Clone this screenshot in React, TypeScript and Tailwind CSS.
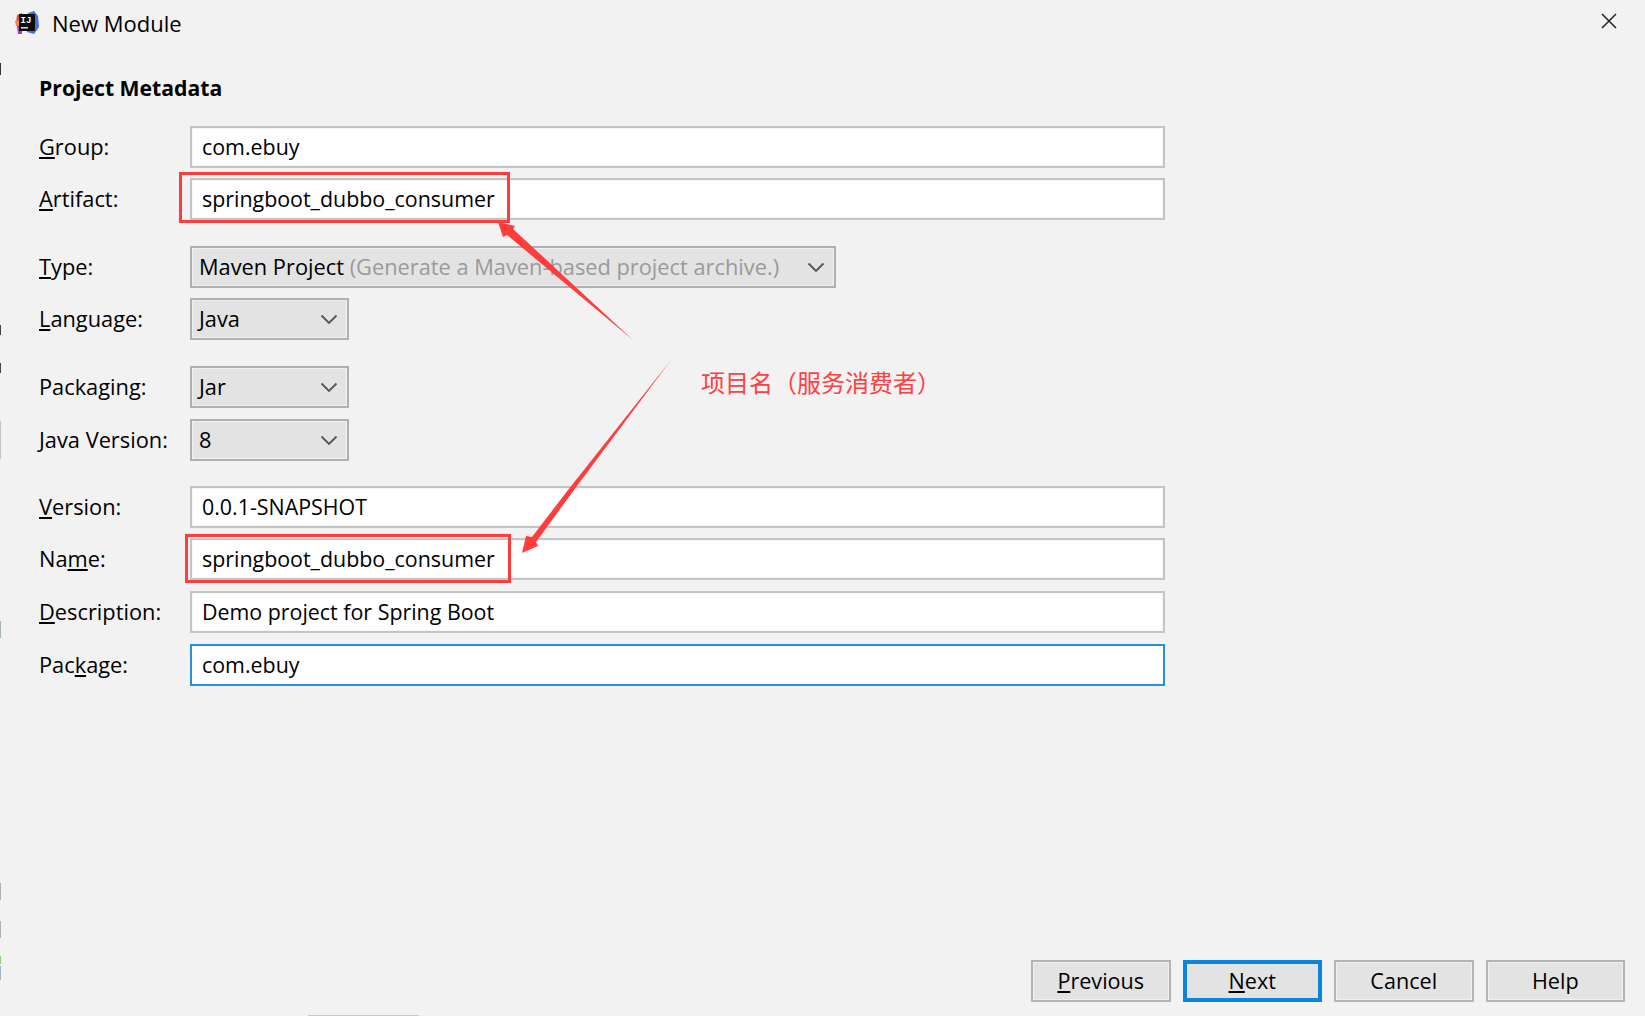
import type { ReactNode } from 'react'

const uiFont = "font-['Open_Sans','Noto_Sans',sans-serif]"

function Label({ before = '', mark, after = '' }: { before?: string; mark: string; after?: string }) {
  return (
    <label className="w-[151px] shrink-0 text-[21.8px] text-black">
      {before}
      <span className="underline underline-offset-2">{mark}</span>
      {after}
    </label>
  )
}

function TextField({ value, focused = false }: { value: string; focused?: boolean }) {
  return (
    <div
      className={`flex h-[42px] w-[975px] items-center bg-white pl-[10px] text-[21.4px] text-black border-2 ${
        focused ? 'border-[#2b8fd8]' : 'border-[#c4c4c4] shadow-[inset_0_0_0_1px_#f6f6f6]'
      }`}
    >
      {value}
    </div>
  )
}

function Chevron() {
  return (
    <svg width="18" height="11" viewBox="0 0 18 11" className="shrink-0">
      <path d="M1.5 1.5 L9 9 L16.5 1.5" fill="none" stroke="#555555" strokeWidth="1.8" />
    </svg>
  )
}

function Combo({ className, children }: { className: string; children: ReactNode }) {
  return (
    <div className={`flex h-[42px] items-center justify-between border-2 border-[#b0b0b0] bg-[#e3e3e3] pl-[7px] pr-[9px] text-[21.8px] text-black shadow-[inset_0_0_0_1px_#f0f0f0] ${className}`}>
      <span className="whitespace-nowrap">{children}</span>
      <Chevron />
    </div>
  )
}

function Row({ className = '', children }: { className?: string; children: ReactNode }) {
  return <div className={`relative flex items-center ${className}`}>{children}</div>
}

function DialogButton({ children, primary = false }: { children: ReactNode; primary?: boolean }) {
  return (
    <button
      className={`h-[42px] w-[139.5px] bg-[#e3e3e3] text-[21.6px] text-black ${
        primary ? 'border-4 border-[#0a84dc]' : 'border-2 border-[#b4b4b4] shadow-[inset_0_0_0_1px_#f0f0f0]'
      }`}
    >
      {children}
    </button>
  )
}

export default function App() {
  return (
    <div className={`relative h-[1016px] w-[1645px] overflow-hidden bg-[#f2f2f2] ${uiFont}`}>
      {/* title bar */}
      <header className="flex h-[48px] items-center pb-[2px] pl-[14px] pr-[28px]">
        <svg width="26" height="26" viewBox="0 0 26 26" className="shrink-0">
          <polygon points="14,3 20,1 24,6 25,17 20,24 13,22" fill="#4a6ee0" />
          <polygon points="3,5 8,3 8,14 2,13" fill="#f2453d" />
          <polygon points="1,11 5,10 5,16 2,16" fill="#f58a2c" />
          <polygon points="3,16 8,16 8,24 4,24" fill="#b03ac8" />
          <rect x="5" y="4" width="16" height="17" fill="#0d0d0d" />
          <rect x="7" y="17" width="7" height="1.5" fill="#dddddd" />
          <text x="6.5" y="13" fontSize="9" fontWeight="700" fill="#ffffff" fontFamily="Liberation Mono, monospace">IJ</text>
        </svg>
        <span className="ml-[12px] text-[22px] text-black">New Module</span>
        <svg width="16" height="16" viewBox="0 0 16 16" className="mt-[-4px] ml-auto">
          <path d="M1 1 L15 15 M15 1 L1 15" stroke="#222222" strokeWidth="1.5" />
        </svg>
      </header>

      {/* form */}
      <main className="pl-[39px]">
        <h2 className="mt-[24px] text-[21.2px] leading-[32px] font-bold text-black">Project Metadata</h2>

        <Row className="mt-[22px]">
          <Label mark="G" after="roup:" />
          <TextField value="com.ebuy" />
        </Row>
        <Row className="mt-[10px]">
          <Label mark="A" after="rtifact:" />
          <TextField value="springboot_dubbo_consumer" />
          <div className="absolute left-[140px] top-[-6px] h-[51px] w-[331px] border-[3px] border-[#ff3d3d]" />
        </Row>

        <Row className="mt-[26px]">
          <Label mark="T" after="ype:" />
          <Combo className="w-[646px]">
            Maven Project <span className="text-[#9a9a9a]">(Generate a Maven-based project archive.)</span>
          </Combo>
        </Row>
        <Row className="mt-[10px]">
          <Label mark="L" after="anguage:" />
          <Combo className="w-[159px]">Java</Combo>
        </Row>

        <Row className="mt-[26px]">
          <Label before="Packa" mark="g" after="ing:" />
          <Combo className="w-[159px]">Jar</Combo>
        </Row>
        <Row className="mt-[11px]">
          <Label mark="J" after="ava Version:" />
          <Combo className="w-[159px]">8</Combo>
        </Row>

        <Row className="mt-[25px]">
          <Label mark="V" after="ersion:" />
          <TextField value="0.0.1-SNAPSHOT" />
        </Row>
        <Row className="mt-[10px]">
          <Label before="Na" mark="m" after="e:" />
          <TextField value="springboot_dubbo_consumer" />
          <div className="absolute left-[146px] top-[-4px] h-[49px] w-[326px] border-[3px] border-[#ff3d3d]" />
        </Row>
        <Row className="mt-[11px]">
          <Label mark="D" after="escription:" />
          <TextField value="Demo project for Spring Boot" />
        </Row>
        <Row className="mt-[11px]">
          <Label before="Pac" mark="k" after="age:" />
          <TextField value="com.ebuy" focused />
        </Row>
      </main>

      {/* footer buttons */}
      <footer className="absolute right-[20px] bottom-[14px] flex gap-[12px]">
        <DialogButton><span className="underline underline-offset-2">P</span>revious</DialogButton>
        <DialogButton primary><span className="underline underline-offset-2">N</span>ext</DialogButton>
        <DialogButton>Cancel</DialogButton>
        <DialogButton>Help</DialogButton>
      </footer>

      {/* stray marks the capture left on the edges */}
      <div className="absolute top-[63px] left-0 h-[12px] w-px bg-[#333333]" />
      <div className="absolute top-[325px] left-0 h-[10px] w-px bg-[#444444]" />
      <div className="absolute top-[363px] left-0 h-[10px] w-px bg-[#444444]" />
      <div className="absolute top-[421px] left-0 h-[38px] w-px bg-[#c4c4c4]" />
      <div className="absolute top-[621px] left-0 h-[17px] w-px bg-[#a8b4bc]" />
      <div className="absolute top-[883px] left-0 h-[17px] w-px bg-[#a8b4bc]" />
      <div className="absolute top-[921px] left-0 h-[17px] w-px bg-[#a8b4bc]" />
      <div className="absolute top-[956px] left-0 h-[8px] w-px bg-[#8ccc7c]" />
      <div className="absolute top-[966px] left-0 h-[14px] w-px bg-[#a8b4bc]" />
      <div className="absolute bottom-0 left-[308px] h-px w-[111px] bg-[#c8c8c8]" />

      {/* annotation arrows drawn on the screenshot */}
      <svg width="1645" height="1016" viewBox="0 0 1645 1016" className="pointer-events-none absolute top-0 left-0">
        <polygon points="633,340 513,229 515,226 498,222 503,237 507,235" fill="#ff3d3d" />
        <polygon points="671,360 574,490 536,542 538,546 522,553 526,536 532,537 568,490" fill="#ff3d3d" />
      </svg>
      <div className="absolute top-[364px] left-[701px] font-['Noto_Sans_CJK_SC',sans-serif] text-[24px] leading-[36px] text-[#ff4040]">
        项目名（服务消费者）
      </div>
    </div>
  )
}
